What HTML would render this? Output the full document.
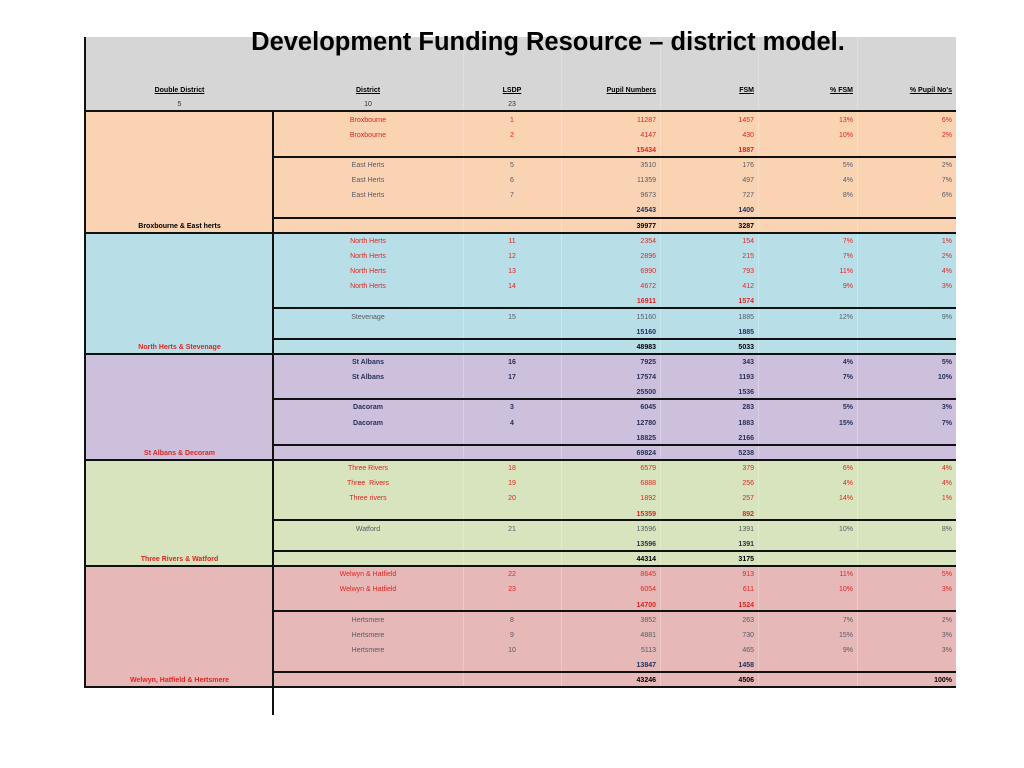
<!DOCTYPE html>
<html><head><meta charset="utf-8"><style>
*{margin:0;padding:0;box-sizing:border-box}
body{width:1024px;height:768px;background:#fff;position:relative;overflow:hidden;font-family:"Liberation Sans",Arial,sans-serif;font-size:7px}
.abs{position:absolute}
h1{position:absolute;left:0;width:1096px;top:28px;text-align:center;font-family:"Liberation Sans",Arial,sans-serif;font-size:25.5px;font-weight:bold;color:#000;z-index:3}
.hd{left:86px;top:37px;width:870px;height:73px;background:#d6d6d6}
.row{display:flex;height:15.16px;line-height:15.16px;white-space:pre}
.row div{flex:none}
.c1{width:190px;text-align:center}
.c2{width:98px;text-align:center}
.c3,.c4,.c5,.c6{width:99px;text-align:right;padding-right:4px}
.c4{width:98px}
.r{color:#e32420}.g{color:#555a66}.n{color:#27305a}.b{font-weight:bold}.k{color:#000;font-weight:bold}
.hl{height:2px;background:#111}
.vl{width:2px;background:#111}
.u{text-decoration:underline;font-weight:bold}
.grid{top:37px;height:650px;width:1px;background:rgba(255,255,255,.25)}
</style></head><body>
<div class="abs hd"></div>
<h1>Development Funding Resource – district model.</h1>

<div class="abs" style="left:86px;top:111.5px;width:870px;height:121.1px;background:#fad3b3"></div>
<div class="abs" style="left:86px;top:232.6px;width:870px;height:121.1px;background:#b8dfe8"></div>
<div class="abs" style="left:86px;top:353.7px;width:870px;height:106px;background:#cdc0dc"></div>
<div class="abs" style="left:86px;top:459.7px;width:870px;height:106px;background:#d8e4bd"></div>
<div class="abs" style="left:86px;top:565.7px;width:870px;height:121.1px;background:#e6b8b8"></div>

<div class="abs grid" style="left:463px"></div>
<div class="abs grid" style="left:561px"></div>
<div class="abs grid" style="left:660px"></div>
<div class="abs grid" style="left:758px"></div>
<div class="abs grid" style="left:857px"></div>

<div class="abs" style="left:86px;top:83px;width:870px">
<div class="row" style="color:#000"><div style="width:187px;text-align:center" class="u">Double District</div><div class="c1"><span class="u">District</span></div><div class="c2"><span class="u">LSDP</span></div><div class="c3"><span class="u">Pupil Numbers</span></div><div class="c4"><span class="u">FSM</span></div><div class="c5"><span class="u">% FSM</span></div><div class="c6"><span class="u">% Pupil No's</span></div></div>
<div class="row" style="color:#333;height:13px;line-height:13px"><div style="width:187px;text-align:center">5</div><div class="c1">10</div><div class="c2">23</div></div>
</div>

<div class="abs k" style="left:86px;top:218.5px;width:187px;text-align:center;line-height:15px">Broxbourne &amp; East herts</div>
<div class="abs b r" style="left:86px;top:339.6px;width:187px;text-align:center;line-height:15px">North Herts &amp; Stevenage</div>
<div class="abs b r" style="left:86px;top:445.6px;width:187px;text-align:center;line-height:15px">St Albans &amp; Decoram</div>
<div class="abs b r" style="left:86px;top:551.6px;width:187px;text-align:center;line-height:15px">Three Rivers &amp; Watford</div>
<div class="abs b r" style="left:86px;top:672.7px;width:187px;text-align:center;line-height:15px">Welwyn, Hatfield &amp; Hertsmere</div>

<div class="abs" style="left:273px;top:112.5px;width:683px">
<div class="row r"><div class="c1">Broxbourne</div><div class="c2">1</div><div class="c3">11287</div><div class="c4">1457</div><div class="c5">13%</div><div class="c6">6%</div></div>
<div class="row r"><div class="c1">Broxbourne</div><div class="c2">2</div><div class="c3">4147</div><div class="c4">430</div><div class="c5">10%</div><div class="c6">2%</div></div>
<div class="row r b"><div class="c1"></div><div class="c2"></div><div class="c3">15434</div><div class="c4">1887</div></div>
<div class="row g"><div class="c1">East Herts</div><div class="c2">5</div><div class="c3">3510</div><div class="c4">176</div><div class="c5">5%</div><div class="c6">2%</div></div>
<div class="row g"><div class="c1">East Herts</div><div class="c2">6</div><div class="c3">11359</div><div class="c4">497</div><div class="c5">4%</div><div class="c6">7%</div></div>
<div class="row g"><div class="c1">East Herts</div><div class="c2">7</div><div class="c3">9673</div><div class="c4">727</div><div class="c5">8%</div><div class="c6">6%</div></div>
<div class="row n b"><div class="c1"></div><div class="c2"></div><div class="c3">24543</div><div class="c4">1400</div></div>
<div class="row k"><div class="c1"></div><div class="c2"></div><div class="c3">39977</div><div class="c4">3287</div></div>

<div class="row r"><div class="c1">North Herts</div><div class="c2">11</div><div class="c3">2354</div><div class="c4">154</div><div class="c5">7%</div><div class="c6">1%</div></div>
<div class="row r"><div class="c1">North Herts</div><div class="c2">12</div><div class="c3">2896</div><div class="c4">215</div><div class="c5">7%</div><div class="c6">2%</div></div>
<div class="row r"><div class="c1">North Herts</div><div class="c2">13</div><div class="c3">6990</div><div class="c4">793</div><div class="c5">11%</div><div class="c6">4%</div></div>
<div class="row r"><div class="c1">North Herts</div><div class="c2">14</div><div class="c3">4672</div><div class="c4">412</div><div class="c5">9%</div><div class="c6">3%</div></div>
<div class="row r b"><div class="c1"></div><div class="c2"></div><div class="c3">16911</div><div class="c4">1574</div></div>
<div class="row g"><div class="c1">Stevenage</div><div class="c2">15</div><div class="c3">15160</div><div class="c4">1885</div><div class="c5">12%</div><div class="c6">9%</div></div>
<div class="row n b"><div class="c1"></div><div class="c2"></div><div class="c3">15160</div><div class="c4">1885</div></div>
<div class="row k"><div class="c1"></div><div class="c2"></div><div class="c3">48983</div><div class="c4">5033</div></div>

<div class="row n b"><div class="c1">St Albans</div><div class="c2">16</div><div class="c3">7925</div><div class="c4">343</div><div class="c5">4%</div><div class="c6">5%</div></div>
<div class="row n b"><div class="c1">St Albans</div><div class="c2">17</div><div class="c3">17574</div><div class="c4">1193</div><div class="c5">7%</div><div class="c6">10%</div></div>
<div class="row n b"><div class="c1"></div><div class="c2"></div><div class="c3">25500</div><div class="c4">1536</div></div>
<div class="row n b"><div class="c1">Dacoram</div><div class="c2">3</div><div class="c3">6045</div><div class="c4">283</div><div class="c5">5%</div><div class="c6">3%</div></div>
<div class="row n b"><div class="c1">Dacoram</div><div class="c2">4</div><div class="c3">12780</div><div class="c4">1883</div><div class="c5">15%</div><div class="c6">7%</div></div>
<div class="row n b"><div class="c1"></div><div class="c2"></div><div class="c3">18825</div><div class="c4">2166</div></div>
<div class="row n b"><div class="c1"></div><div class="c2"></div><div class="c3">69824</div><div class="c4">5238</div></div>

<div class="row r"><div class="c1">Three Rivers</div><div class="c2">18</div><div class="c3">6579</div><div class="c4">379</div><div class="c5">6%</div><div class="c6">4%</div></div>
<div class="row r"><div class="c1">Three  Rivers</div><div class="c2">19</div><div class="c3">6888</div><div class="c4">256</div><div class="c5">4%</div><div class="c6">4%</div></div>
<div class="row r"><div class="c1">Three rivers</div><div class="c2">20</div><div class="c3">1892</div><div class="c4">257</div><div class="c5">14%</div><div class="c6">1%</div></div>
<div class="row r b"><div class="c1"></div><div class="c2"></div><div class="c3">15359</div><div class="c4">892</div></div>
<div class="row g"><div class="c1">Watford</div><div class="c2">21</div><div class="c3">13596</div><div class="c4">1391</div><div class="c5">10%</div><div class="c6">8%</div></div>
<div class="row n b"><div class="c1"></div><div class="c2"></div><div class="c3">13596</div><div class="c4">1391</div></div>
<div class="row k"><div class="c1"></div><div class="c2"></div><div class="c3">44314</div><div class="c4">3175</div></div>

<div class="row r"><div class="c1">Welwyn &amp; Hatfield</div><div class="c2">22</div><div class="c3">8645</div><div class="c4">913</div><div class="c5">11%</div><div class="c6">5%</div></div>
<div class="row r"><div class="c1">Welwyn &amp; Hatfield</div><div class="c2">23</div><div class="c3">6054</div><div class="c4">611</div><div class="c5">10%</div><div class="c6">3%</div></div>
<div class="row r b"><div class="c1"></div><div class="c2"></div><div class="c3">14700</div><div class="c4">1524</div></div>
<div class="row g"><div class="c1">Hertsmere</div><div class="c2">8</div><div class="c3">3852</div><div class="c4">263</div><div class="c5">7%</div><div class="c6">2%</div></div>
<div class="row g"><div class="c1">Hertsmere</div><div class="c2">9</div><div class="c3">4881</div><div class="c4">730</div><div class="c5">15%</div><div class="c6">3%</div></div>
<div class="row g"><div class="c1">Hertsmere</div><div class="c2">10</div><div class="c3">5113</div><div class="c4">465</div><div class="c5">9%</div><div class="c6">3%</div></div>
<div class="row n b"><div class="c1"></div><div class="c2"></div><div class="c3">13847</div><div class="c4">1458</div></div>
<div class="row k"><div class="c1"></div><div class="c2"></div><div class="c3">43246</div><div class="c4">4506</div><div class="c5"></div><div class="c6">100%</div></div>
</div>

<div class="abs hl" style="left:85px;top:109.5px;width:871px"></div>
<div class="abs hl" style="left:85px;top:231.6px;width:871px"></div>
<div class="abs hl" style="left:85px;top:352.7px;width:871px"></div>
<div class="abs hl" style="left:85px;top:458.7px;width:871px"></div>
<div class="abs hl" style="left:85px;top:564.7px;width:871px"></div>
<div class="abs hl" style="left:85px;top:685.8px;width:871px"></div>
<div class="abs hl" style="left:273px;top:155.9px;width:683px"></div>
<div class="abs hl" style="left:273px;top:216.5px;width:683px"></div>
<div class="abs hl" style="left:273px;top:307.3px;width:683px"></div>
<div class="abs hl" style="left:273px;top:337.6px;width:683px"></div>
<div class="abs hl" style="left:273px;top:398.2px;width:683px"></div>
<div class="abs hl" style="left:273px;top:443.6px;width:683px"></div>
<div class="abs hl" style="left:273px;top:519.3px;width:683px"></div>
<div class="abs hl" style="left:273px;top:549.6px;width:683px"></div>
<div class="abs hl" style="left:273px;top:610.1px;width:683px"></div>
<div class="abs hl" style="left:273px;top:670.7px;width:683px"></div>
<div class="abs vl" style="left:84px;top:37px;height:651px"></div>
<div class="abs vl" style="left:272px;top:110px;height:605px"></div>
</body></html>
